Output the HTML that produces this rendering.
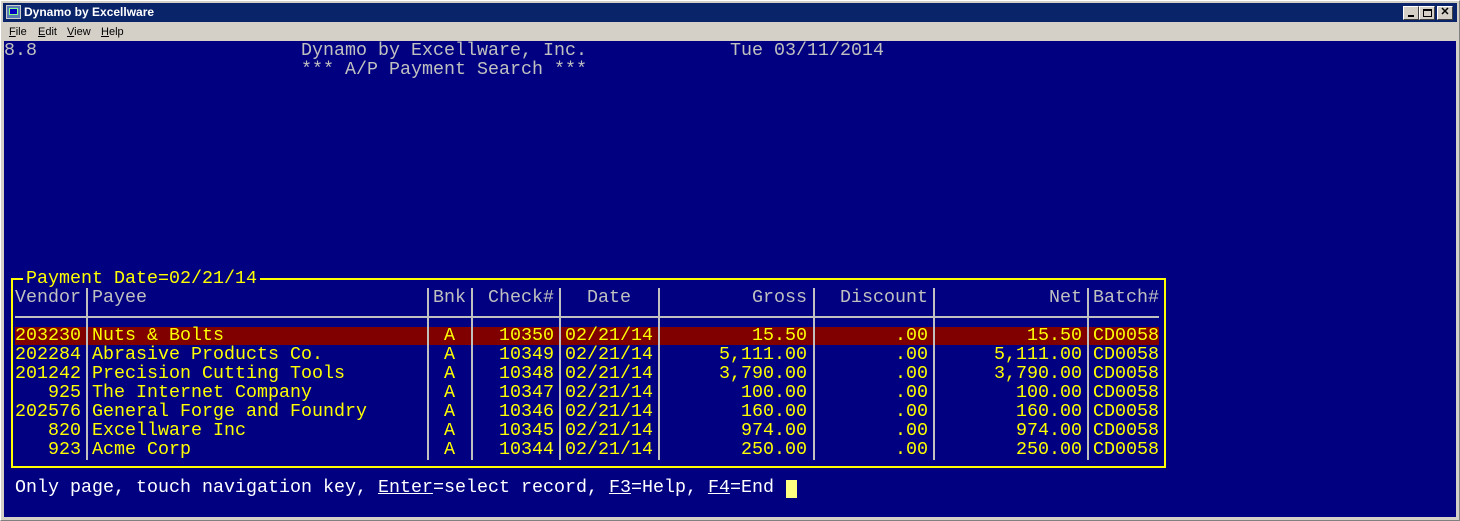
<!DOCTYPE html>
<html><head><meta charset="utf-8"><style>
*{margin:0;padding:0;box-sizing:border-box}
body{width:1460px;height:521px;background:#d4d0c8;position:relative;overflow:hidden;font-family:"Liberation Mono",monospace}
.abs{position:absolute}
#tb{left:3px;top:3px;width:1454px;height:19px;background:#0a246a}
#tb .t{left:21px;top:2px;color:#fff;font:bold 12px "Liberation Sans",sans-serif;white-space:nowrap}
.btn{top:3px;width:16px;height:14px;background:#d4d0c8;border:1px solid;border-color:#fff #404040 #404040 #fff}
.menu{top:26px;font:11px "Liberation Sans",sans-serif;color:#000}
.l{position:absolute;white-space:pre;font-size:18.333px;line-height:19px;height:19px;color:#c0c0c0}
.y{color:#ffff00}
.r{text-align:right}
.vs{position:absolute;width:2px;background:#c0c0c0;top:288px;height:172px}
</style></head><body>
<div class="abs" style="left:0;top:0;width:1460px;height:521px;border:1px solid #808080;border-top-color:#fff;border-left-color:#fff"></div>
<div id="tb" class="abs">
 <div class="abs" style="left:3px;top:2px;width:15px;height:14px;background:#5a7ab5;border:1px solid #ccc"><div class="abs" style="left:2px;top:2px;width:9px;height:7px;background:#0000c0;border:1px solid #8f8"></div></div>
 <div class="abs t">Dynamo by Excellware</div>
 <div class="abs btn" style="left:1400px"><div class="abs" style="left:4px;top:8px;width:6px;height:2px;background:#000"></div></div>
 <div class="abs btn" style="left:1416px"><div class="abs" style="left:3px;top:2px;width:9px;height:8px;border:1px solid #000;border-top-width:2px"></div></div>
 <div class="abs btn" style="left:1434px;font:bold 11px 'Liberation Sans',sans-serif;text-align:center;line-height:11px">✕</div>
</div>
<div class="abs menu" style="left:9px"><u>F</u>ile</div>
<div class="abs menu" style="left:38px"><u>E</u>dit</div>
<div class="abs menu" style="left:67px"><u>V</u>iew</div>
<div class="abs menu" style="left:101px"><u>H</u>elp</div>

<div class="abs" style="left:4px;top:41px;width:1452px;height:476px;background:#000080"></div>
<div class="l" style="left:4px;top:41px">8.8</div>
<div class="l" style="left:301px;top:41px">Dynamo by Excellware, Inc.</div>
<div class="l" style="left:730px;top:41px">Tue 03/11/2014</div>
<div class="l" style="left:301px;top:60px">*** A/P Payment Search ***</div>

<div class="abs" style="left:11px;top:278px;width:1155px;height:190px;border:2px solid #ffff00"></div>
<div class="l y" style="left:23px;top:269px;background:#000080;padding:0 3px">Payment Date=02/21/14</div>

<div class="abs" style="left:15px;top:327px;width:1144px;height:18px;background:#800000"></div>
<div class="abs" style="left:15px;top:316px;width:1144px;height:2px;background:#c0c0c0"></div>
<div class="vs" style="left:86px"></div>
<div class="vs" style="left:427px"></div>
<div class="vs" style="left:471px"></div>
<div class="vs" style="left:559px"></div>
<div class="vs" style="left:658px"></div>
<div class="vs" style="left:813px"></div>
<div class="vs" style="left:933px"></div>
<div class="vs" style="left:1087px"></div>

<div class="l" style="left:15px;top:288px">Vendor</div>
<div class="l" style="left:92px;top:288px">Payee</div>
<div class="l" style="left:433px;top:288px">Bnk</div>
<div class="l r" style="left:444px;width:110px;top:288px">Check#</div>
<div class="l" style="left:587px;top:288px">Date</div>
<div class="l r" style="left:664px;width:143px;top:288px">Gross</div>
<div class="l r" style="left:818px;width:110px;top:288px">Discount</div>
<div class="l r" style="left:939px;width:143px;top:288px">Net</div>
<div class="l" style="left:1093px;top:288px">Batch#</div>

<div class="l y r" style="left:0;width:81px;top:326px">203230</div><div class="l y" style="left:92px;top:326px">Nuts &amp; Bolts</div><div class="l y" style="left:444px;top:326px">A</div><div class="l y r" style="left:444px;width:110px;top:326px">10350</div><div class="l y" style="left:565px;top:326px">02/21/14</div><div class="l y r" style="left:664px;width:143px;top:326px">15.50</div><div class="l y r" style="left:818px;width:110px;top:326px">.00</div><div class="l y r" style="left:939px;width:143px;top:326px">15.50</div><div class="l y" style="left:1093px;top:326px">CD0058</div>

<div class="l y r" style="left:0;width:81px;top:345px">202284</div><div class="l y" style="left:92px;top:345px">Abrasive Products Co.</div><div class="l y" style="left:444px;top:345px">A</div><div class="l y r" style="left:444px;width:110px;top:345px">10349</div><div class="l y" style="left:565px;top:345px">02/21/14</div><div class="l y r" style="left:664px;width:143px;top:345px">5,111.00</div><div class="l y r" style="left:818px;width:110px;top:345px">.00</div><div class="l y r" style="left:939px;width:143px;top:345px">5,111.00</div><div class="l y" style="left:1093px;top:345px">CD0058</div>

<div class="l y r" style="left:0;width:81px;top:364px">201242</div><div class="l y" style="left:92px;top:364px">Precision Cutting Tools</div><div class="l y" style="left:444px;top:364px">A</div><div class="l y r" style="left:444px;width:110px;top:364px">10348</div><div class="l y" style="left:565px;top:364px">02/21/14</div><div class="l y r" style="left:664px;width:143px;top:364px">3,790.00</div><div class="l y r" style="left:818px;width:110px;top:364px">.00</div><div class="l y r" style="left:939px;width:143px;top:364px">3,790.00</div><div class="l y" style="left:1093px;top:364px">CD0058</div>

<div class="l y r" style="left:0;width:81px;top:383px">925</div><div class="l y" style="left:92px;top:383px">The Internet Company</div><div class="l y" style="left:444px;top:383px">A</div><div class="l y r" style="left:444px;width:110px;top:383px">10347</div><div class="l y" style="left:565px;top:383px">02/21/14</div><div class="l y r" style="left:664px;width:143px;top:383px">100.00</div><div class="l y r" style="left:818px;width:110px;top:383px">.00</div><div class="l y r" style="left:939px;width:143px;top:383px">100.00</div><div class="l y" style="left:1093px;top:383px">CD0058</div>

<div class="l y r" style="left:0;width:81px;top:402px">202576</div><div class="l y" style="left:92px;top:402px">General Forge and Foundry</div><div class="l y" style="left:444px;top:402px">A</div><div class="l y r" style="left:444px;width:110px;top:402px">10346</div><div class="l y" style="left:565px;top:402px">02/21/14</div><div class="l y r" style="left:664px;width:143px;top:402px">160.00</div><div class="l y r" style="left:818px;width:110px;top:402px">.00</div><div class="l y r" style="left:939px;width:143px;top:402px">160.00</div><div class="l y" style="left:1093px;top:402px">CD0058</div>

<div class="l y r" style="left:0;width:81px;top:421px">820</div><div class="l y" style="left:92px;top:421px">Excellware Inc</div><div class="l y" style="left:444px;top:421px">A</div><div class="l y r" style="left:444px;width:110px;top:421px">10345</div><div class="l y" style="left:565px;top:421px">02/21/14</div><div class="l y r" style="left:664px;width:143px;top:421px">974.00</div><div class="l y r" style="left:818px;width:110px;top:421px">.00</div><div class="l y r" style="left:939px;width:143px;top:421px">974.00</div><div class="l y" style="left:1093px;top:421px">CD0058</div>

<div class="l y r" style="left:0;width:81px;top:440px">923</div><div class="l y" style="left:92px;top:440px">Acme Corp</div><div class="l y" style="left:444px;top:440px">A</div><div class="l y r" style="left:444px;width:110px;top:440px">10344</div><div class="l y" style="left:565px;top:440px">02/21/14</div><div class="l y r" style="left:664px;width:143px;top:440px">250.00</div><div class="l y r" style="left:818px;width:110px;top:440px">.00</div><div class="l y r" style="left:939px;width:143px;top:440px">250.00</div><div class="l y" style="left:1093px;top:440px">CD0058</div>

<div class="l" style="left:15px;top:478px;color:#fff">Only page, touch navigation key, <u>Enter</u>=select record, <u>F3</u>=Help, <u>F4</u>=End</div>
<div class="abs" style="left:786px;top:480px;width:11px;height:18px;background:#ffff80"></div>
</body></html>
